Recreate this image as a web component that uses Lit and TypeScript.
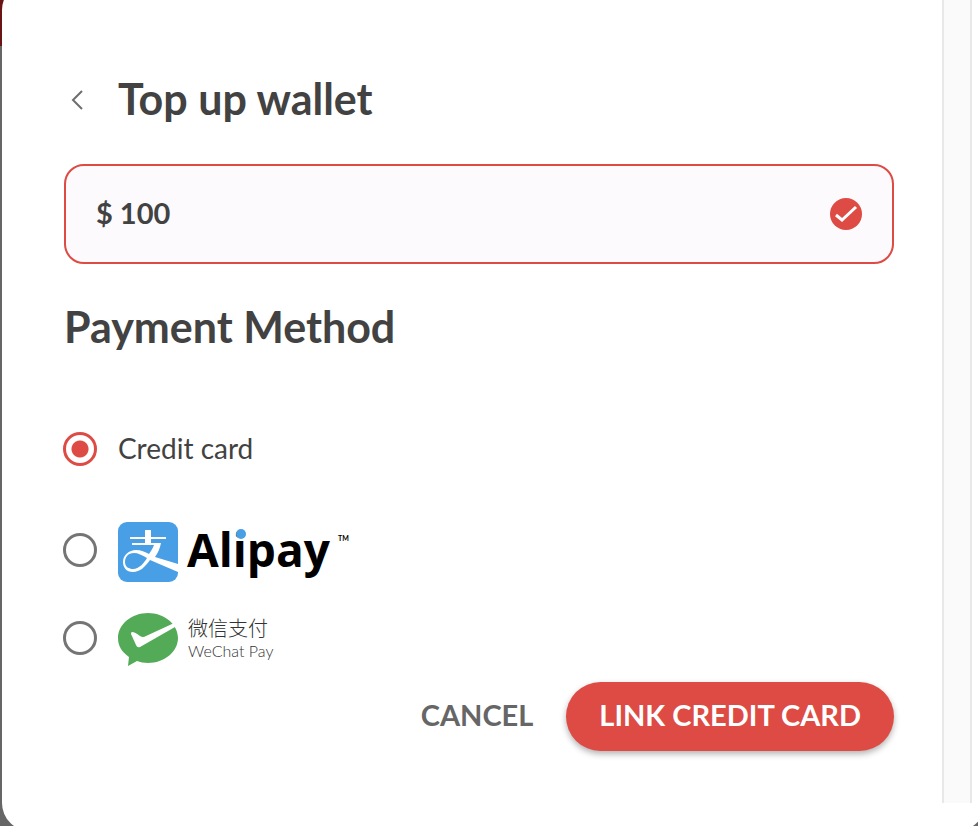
import { LitElement, html, css } from "lit";
import { customElement, state } from "lit/decorators.js";

@customElement("app-root")
export class AppRoot extends LitElement {
  @state() private method = "card";

  static styles = css`
    :host {
      display: block;
      font-family: Lato, "Noto Sans CJK SC", sans-serif;
      color: #424242;
    }
    * {
      box-sizing: border-box;
    }
    .backdrop {
      min-height: 100vh;
      overflow: hidden;
      background: linear-gradient(#6b1416 0 46px, #666 46px);
    }
    .dialog {
      display: flex;
      min-height: calc(100vh + 23px);
      margin: -18px -7px -5px 2px;
      padding: 0 13px 28px 0;
      border-radius: 28px;
      background: #fff;
    }
    .content {
      flex: 1;
      min-width: 0;
      padding: 88px 48px 24px 62px;
    }
    .gutter {
      flex: 0 0 30px;
      border: solid #e8e8e8;
      border-width: 0 2px;
      background: #fafafa;
    }
    header {
      display: flex;
      align-items: center;
      gap: 28px;
      margin-bottom: 38px;
    }
    .back {
      display: flex;
      width: 26px;
      padding: 4px 6px 0;
      border: 0;
      background: none;
    }
    h1,
    h2 {
      margin: 0;
      font-size: 43px;
      line-height: 58px;
      font-weight: 700;
    }
    h1 {
      margin-bottom: -2px;
    }
    .amount {
      display: flex;
      align-items: center;
      height: 100px;
      padding: 0 30px;
      border: 2px solid #dd4b44;
      border-radius: 20px;
      background: #fcfafc;
    }
    .amount input {
      flex: 1;
      min-width: 0;
      padding: 0 0 2px;
      border: 0;
      outline: 0;
      background: none;
      color: inherit;
      font: 700 29px/40px Lato, sans-serif;
    }
    h2 {
      margin-top: 34px;
    }
    fieldset {
      margin: 63px 0 0;
      padding: 0;
      border: 0;
    }
    .option {
      display: flex;
      align-items: center;
      gap: 21px;
      height: 60px;
      margin-left: -1px;
      margin-bottom: 28px;
      font-size: 28px;
      line-height: 40px;
    }
    .option:first-child {
      margin-bottom: 41px;
    }
    .option:last-child {
      margin-bottom: 14px;
    }
    .option span {
      padding-bottom: 2px;
    }
    .option input {
      appearance: none;
      flex: none;
      width: 34px;
      height: 34px;
      margin: 0;
      border: 3px solid #757575;
      border-radius: 50%;
    }
    .option input:checked {
      border-color: #dd4b44;
      background: radial-gradient(circle, #dd4b44 8px, transparent 9px);
    }
    .logo {
      display: block;
      padding-top: 4px;
      box-sizing: content-box;
    }
    .alipay {
      font: 700 46px "Open Sans", sans-serif;
    }
    .tm {
      font: 700 7px Lato, sans-serif;
    }
    .wechat-cn {
      font: 300 20px "Noto Sans CJK SC", sans-serif;
    }
    .wechat-en {
      font: 300 16px Lato, sans-serif;
    }
    footer {
      display: flex;
      justify-content: flex-end;
      align-items: center;
    }
    footer button {
      height: 69px;
      padding: 0 33px 3px;
      border: 0;
      border-radius: 35px;
      background: none;
      color: #666;
      font: 700 29px/40px Lato, sans-serif;
    }
    footer .primary {
      background: #dd4b44;
      color: #fff;
      box-shadow: 0 3px 6px rgba(0, 0, 0, 0.3);
    }
  `;

  private radio(id: string, label: unknown) {
    return html`<label class="option">
      <input
        type="radio"
        name="method"
        .checked=${this.method === id}
        @change=${() => (this.method = id)}
      />
      ${label}
    </label>`;
  }

  private alipay = html`<svg class="logo" width="240" height="60" role="img" aria-label="Alipay">
    <rect width="60" height="60" rx="9" fill="#489fe5" />
    <g fill="#fff">
      <path d="M27 8H33V15H48V17H33V21H43C42 26 40 31 37 35L60 42V50L32 38C27 45 22 50 15 50C8 50 5 45 5 40C5 33 11 28 18 28C23 28 27 30 31 32C33 29 35 26 36 23H14V21H27V17H12V15H27Z" />
      <path
        d="M29 36C24 33 20 31 16 31C10 31 7 35 7 40C7 45 11 47 15 47C21 47 26 41 29 36Z"
        fill="#489fe5"
      />
    </g>
    <text class="alipay" x="69" y="45">Alipay</text>
    <circle cx="123" cy="12" r="5" fill="#489fe5" />
    <text class="tm" x="220" y="19">TM</text>
  </svg>`;

  private wechat = html`<svg class="logo" width="160" height="54" role="img" aria-label="WeChat Pay">
    <path
      d="M30 0C46 0 60 11 60 25S46 50 30 50C26 50 22 49 19 48L10 53L11 44C4 39 0 33 0 25C0 11 14 0 30 0Z"
      fill="#54ab57"
    />
    <path
      d="M14 19Q17 19 22 23Q25 25 28 23L54 11L60 11L57 14L22 34Q19 35 18 32L13 21Q13 19 14 19Z"
      fill="#fff"
    />
    <g fill="#333">
      <text class="wechat-cn" x="70" y="23">微信支付</text>
      <text class="wechat-en" x="70" y="44">WeChat Pay</text>
    </g>
  </svg>`;

  render() {
    return html`<div class="backdrop">
      <main class="dialog">
        <div class="content">
          <header>
            <button class="back" aria-label="Back">
              <svg width="14" height="20" fill="none" stroke="#6e6e6e" stroke-width="2">
                <path d="M12 1L3 10L12 19" />
              </svg>
            </button>
            <h1>Top up wallet</h1>
          </header>
          <div class="amount">
            <input type="text" aria-label="Amount" value="$ 100" />
            <svg width="32" height="32">
              <circle cx="16" cy="16" r="16" fill="#dd4b44" />
              <path d="M6 17L12 22L26 9" fill="none" stroke="#fff" stroke-width="3" />
            </svg>
          </div>
          <h2>Payment Method</h2>
          <fieldset aria-label="Payment Method">
            ${this.radio("card", html`<span>Credit card</span>`)}
            ${this.radio("alipay", this.alipay)}
            ${this.radio("wechat", this.wechat)}
          </fieldset>
          <footer>
            <button>CANCEL</button>
            <button class="primary">LINK CREDIT CARD</button>
          </footer>
        </div>
        <div class="gutter"></div>
      </main>
    </div>`;
  }
}
